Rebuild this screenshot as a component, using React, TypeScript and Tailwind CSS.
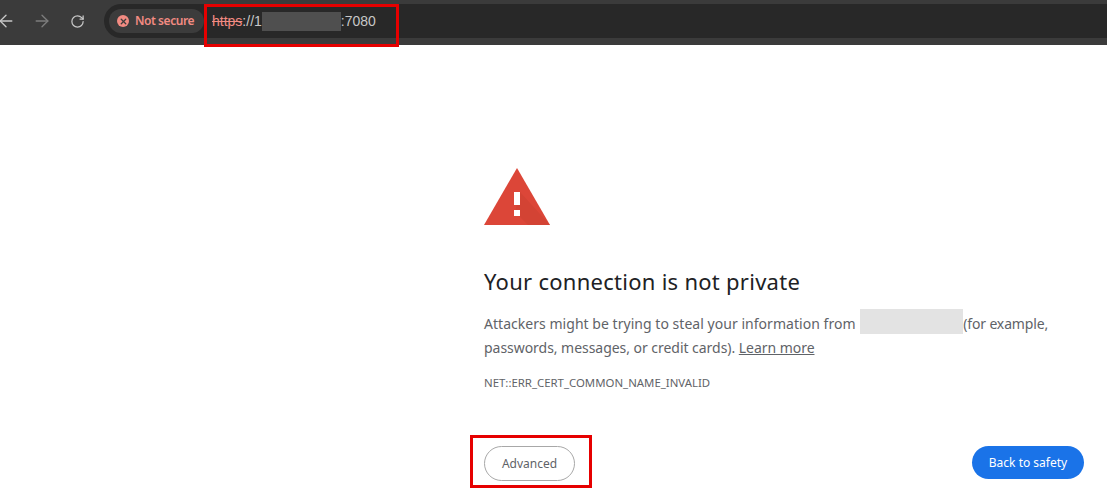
import { ArrowLeft, ArrowRight, RotateCw, X } from "lucide-react";

function Toolbar() {
  return (
    <header className="h-[45px] bg-[#3b3b3b] flex items-start">
      <div className="w-[104px] h-[42px] flex items-center shrink-0 text-[#c7c7c7]">
        <ArrowLeft size={20} strokeWidth={1.6} className="-ml-[4px] mr-[16px]" />
        <ArrowRight size={20} strokeWidth={1.6} className="mr-[18px] text-[#7d7d7d]" />
        <RotateCw size={15} strokeWidth={2} />
      </div>
      <div className="flex-1 h-[34px] mt-[4px] bg-[#282828] rounded-l-[17px] flex items-center pl-[5px]">
        <div className="h-[24px] w-[95px] rounded-full bg-[#3c3c3c] flex items-center gap-[6px] pl-[8px] text-[#f28b82] text-[12px] font-semibold tracking-[-0.45px]">
          <span className="w-[12px] h-[12px] rounded-full bg-[#f28b82] flex items-center justify-center">
            <X size={9} strokeWidth={3.5} className="text-[#3c3c3c]" />
          </span>
          Not secure
        </div>
        <div className="ml-[8px] text-[14px] text-[#c7c7c7] flex items-center font-['Liberation_Sans',sans-serif]">
          <span className="line-through text-[#f28b82]">https</span>
          <span>://1</span>
          <span className="w-[79px] h-[19px] bg-[#4f4f4f]" />
          <span>:7080</span>
        </div>
      </div>
    </header>
  );
}

export default function App() {
  return (
    <div className="relative w-[1107px] h-[495px] overflow-hidden bg-white font-['Noto_Sans',sans-serif]">
      <Toolbar />
      <main className="pl-[484px] pr-[23px] pt-[123px]">
        <svg width="66" height="58" viewBox="0 0 66 58" className="block">
          <path d="M33 0 L66 57 L0 57 Z" fill="#dc4638" />
          <path d="M36 24 L66 57 L44 57 L31 44 Z" fill="#c9402f" opacity="0.5" />
          <rect x="30" y="24" width="6" height="13" fill="#fff" />
          <rect x="30" y="42" width="6" height="6" fill="#fff" />
        </svg>
        <h1 className="mt-[39px] text-[22px] leading-[32px] tracking-[0.27px] text-[#202124]">Your connection is not private</h1>
        <p className="mt-[15px] text-[14px] leading-[24px] text-[#5f6368] w-[580px]">
          <span className="tracking-[0.035px]">Attackers might be trying to steal your information from </span>
          <span className="inline-block align-top -mt-[3px] -mb-[3px] ml-[1px] w-[103px] h-[25px] bg-[#e3e3e3]" />
          <span className="tracking-[-0.15px]">(for example,</span>
          <br />
          <span className="tracking-[-0.04px]">passwords, messages, or credit cards). </span>
          <span className="underline tracking-[-0.04px]">Learn more</span>
        </p>
        <p className="mt-[15px] text-[11.4px] leading-[16px] text-[#5f6368]">NET::ERR_CERT_COMMON_NAME_INVALID</p>
        <div className="mt-[55px] flex items-start justify-between">
          <button className="w-[91px] h-[35px] rounded-full border border-[#a8a8a8] text-[12px] text-[#5f6368]">Advanced</button>
          <button className="w-[112px] h-[33px] rounded-full bg-[#1a73e8] text-[12px] text-white">Back to safety</button>
        </div>
      </main>
      <div className="absolute left-[204px] top-[4px] w-[195px] h-[43px] border-[3px] border-[#e60000]" />
      <div className="absolute left-[470px] top-[435px] w-[122px] h-[53px] border-[3px] border-[#e60000]" />
    </div>
  );
}
